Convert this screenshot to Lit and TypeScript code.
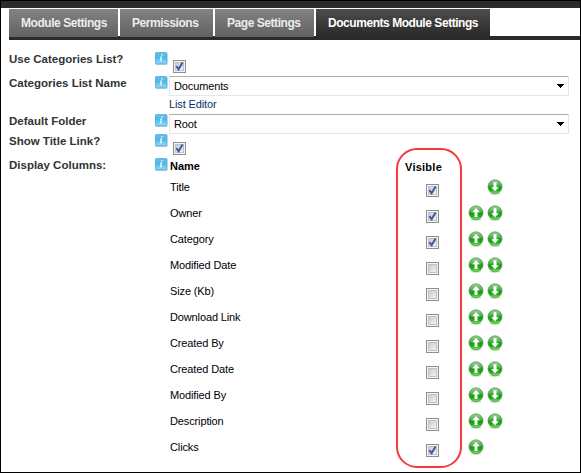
import { LitElement, html, css, svg, nothing } from "lit";
import { customElement, property } from "lit/decorators.js";

@customElement("info-icon")
class InfoIcon extends LitElement {
  static styles = css`
    :host { display: block; width: 13px; height: 13px; }
    svg { display: block; }
  `;
  render() {
    return html`<svg width="13" height="13" viewBox="0 0 13 13">
      <defs>
        <linearGradient id="g" x1="0" y1="0" x2="0" y2="1">
          <stop offset="0" stop-color="#62bfe9" />
          <stop offset=".45" stop-color="#50b8e8" />
          <stop offset="1" stop-color="#8ddcf9" />
        </linearGradient>
      </defs>
      <rect x=".3" y="1" width="12.2" height="12" rx="1" fill="#c3ccd2" />
      <rect x=".4" y=".4" width="11.4" height="11.4" rx="1" fill="url(#g)" stroke="#4aabdc" stroke-width=".8" />
      <path d="M6.4 2.3h1.5l-.3 1.3H6.1zM5.2 4.6h2L6.4 8.3h.8l-.2.9H4.8l.8-3.7h-.6z" fill="#e8f7ff" />
    </svg>`;
  }
}

@customElement("check-box")
class CheckBox extends LitElement {
  @property({ type: Boolean }) checked = false;
  static styles = css`
    :host { display: block; width: 13px; height: 13px; }
    svg { display: block; }
  `;
  render() {
    return html`<svg width="13" height="13" viewBox="0 0 13 13">
      <defs>
        <linearGradient id="b" x1="0" y1="0" x2="1" y2="1">
          <stop offset="0" stop-color="#c4c8cf" />
          <stop offset="1" stop-color="#f6f6f6" />
        </linearGradient>
      </defs>
      <rect x=".5" y=".5" width="12" height="12" fill="#f4f4f4" stroke="#8e8f8f" />
      <rect x="2.5" y="2.5" width="8" height="8" fill="url(#b)" stroke="#bfc3c9" />
      ${this.checked
        ? svg`<path d="M3.4 6.2L5.6 9.2L9.6 2.6" fill="none" stroke="#40589f" stroke-width="2" />`
        : nothing}
    </svg>`;
  }
}

@customElement("move-button")
class MoveButton extends LitElement {
  @property() direction = "up";
  static styles = css`
    :host { display: block; width: 16px; height: 16px; }
    svg { display: block; }
    .down { transform: rotate(180deg); transform-origin: 8px 7.7px; }
  `;
  render() {
    return html`<svg width="16" height="16" viewBox="0 0 16 16">
      <defs>
        <linearGradient id="o" x1="0" y1="0" x2="0" y2="1">
          <stop offset="0" stop-color="#a3d3a0" />
          <stop offset=".42" stop-color="#4dab49" />
          <stop offset=".52" stop-color="#159a10" />
          <stop offset=".75" stop-color="#25ab1b" />
          <stop offset="1" stop-color="#8cf06a" />
        </linearGradient>
      </defs>
      <ellipse cx="8" cy="14.6" rx="5.5" ry="1.2" fill="#d5dfd3" />
      <circle cx="8" cy="7.8" r="7" fill="url(#o)" stroke="#3f9440" stroke-width=".7" />
      <path class=${this.direction} d="M8 3.1L11.9 7.2H9.5V12.1H6.5V7.2H4.1Z" fill="#fff" />
    </svg>`;
  }
}

const TABS = [
  { text: "Module Settings", cls: "t1" },
  { text: "Permissions", cls: "t2" },
  { text: "Page Settings", cls: "t3" },
  { text: "Documents Module Settings", cls: "t4 active" },
];

const COLUMNS: [string, boolean][] = [
  ["Title", true],
  ["Owner", true],
  ["Category", true],
  ["Modified Date", false],
  ["Size (Kb)", false],
  ["Download Link", false],
  ["Created By", false],
  ["Created Date", false],
  ["Modified By", false],
  ["Description", false],
  ["Clicks", true],
];

@customElement("app-root")
class AppRoot extends LitElement {
  static styles = css`
    :host {
      display: block;
      position: relative;
      box-sizing: border-box;
      width: 581px;
      height: 473px;
      border: 1px solid #000;
      background: #fff;
      overflow: hidden;
      font: 11px/14px "Liberation Sans", Arial, sans-serif;
      letter-spacing: -0.13px;
      color: #000;
      white-space: nowrap;
    }
    .topbar { height: 7px; background: #2d2b2c; }
    .tabs {
      display: flex;
      gap: 2px;
      margin: 1px 0 0 8px;
      height: 31px;
      background: linear-gradient(#fff 27px, #2b292a 27px);
    }
    .tab {
      box-sizing: border-box;
      height: 28px;
      padding-left: 12px;
      font: bold 12px/29px "Liberation Sans", Arial, sans-serif;
      letter-spacing: -0.45px;
      color: #ececec;
      background: linear-gradient(#828282, #626262);
    }
    .t1 { width: 109px; }
    .t2 { width: 93px; }
    .t3 { width: 99px; }
    .t4 { width: 174px; }
    .active { height: 31px; color: #fff; background: linear-gradient(#4e4e4e, #2b292a 27px); }
    .form {
      display: grid;
      grid-template-columns: 146px 14px 400px;
      grid-template-rows: 24px 38px 20px 24px auto;
      margin: 12px 0 0 8px;
    }
    .label { font-size: 11.5px; font-weight: bold; letter-spacing: 0; color: #333; }
    .check { padding: 8px 0 0 4px; }
    .select {
      box-sizing: border-box;
      display: flex;
      align-items: center;
      justify-content: space-between;
      height: 20px;
      padding: 0 4px;
      border: 1px solid #e3e6ee;
      border-top-color: #abadb3;
      border-radius: 1px;
    }
    .select svg { display: block; }
    .link { padding: 1px 0 0; color: #003366; }
    .row {
      display: grid;
      grid-template-columns: 257px 42px 19px 16px;
      align-items: center;
      height: 26px;
    }
    .head { height: 16px; font-weight: bold; padding-left: 1px; letter-spacing: 0; }
    .head .visible { margin: 2px 0 0 -22px; letter-spacing: 0.25px; }
    .name { padding-left: 1px; }
    .row check-box { margin-top: 7px; }
    .row move-button { margin-top: -1px; }
    .row .down { grid-column: 4; }
    .highlight {
      position: absolute;
      left: 395px;
      top: 147px;
      box-sizing: border-box;
      width: 66px;
      height: 320px;
      border: 2px solid #fb3838;
      border-radius: 21px;
    }
  `;

  private select(value: string) {
    return html`<div class="select">
      <span>${value}</span>
      <svg width="7" height="4" viewBox="0 0 7 4" shape-rendering="crispEdges">
        <path d="M0 0H7V1H6V2H5V3H4V4H3V3H2V2H1V1H0Z" />
      </svg>
    </div>`;
  }

  private field(label: string, content: unknown) {
    return html`<div class="label">${label}</div>
      <info-icon></info-icon>
      <div>${content}</div>`;
  }

  render() {
    const last = COLUMNS.length - 1;
    return html`
      <div class="topbar"></div>
      <div class="tabs">${TABS.map((t) => html`<div class="tab ${t.cls}">${t.text}</div>`)}</div>
      <div class="form">
        ${this.field("Use Categories List?", html`<div class="check"><check-box checked></check-box></div>`)}
        ${this.field("Categories List Name", html`${this.select("Documents")}<div class="link">List Editor</div>`)}
        ${this.field("Default Folder", this.select("Root"))}
        ${this.field("Show Title Link?", html`<div class="check"><check-box checked></check-box></div>`)}
        ${this.field(
          "Display Columns:",
          html`<div class="row head"><span>Name</span><span class="visible">Visible</span></div>
            ${COLUMNS.map(
              ([name, visible], i) => html`<div class="row">
                <span class="name">${name}</span>
                <check-box ?checked=${visible}></check-box>
                ${i > 0 ? html`<move-button direction="up"></move-button>` : nothing}
                ${i < last ? html`<move-button class="down" direction="down"></move-button>` : nothing}
              </div>`
            )}`
        )}
      </div>
      <div class="highlight"></div>
    `;
  }
}
